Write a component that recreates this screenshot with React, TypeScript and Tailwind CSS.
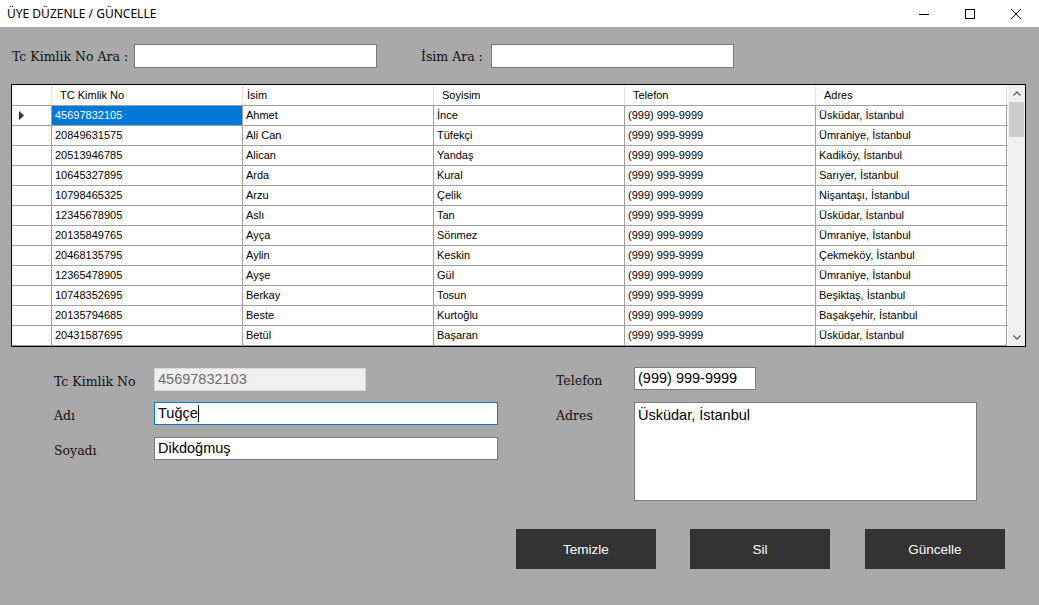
import React from "react";

type Member = {
  tc: string;
  ad: string;
  soyad: string;
  telefon: string;
  adres: string;
};

const MEMBERS: Member[] = [
  { tc: "45697832105", ad: "Ahmet", soyad: "İnce", telefon: "(999) 999-9999", adres: "Üsküdar, İstanbul" },
  { tc: "20849631575", ad: "Ali Can", soyad: "Tüfekçi", telefon: "(999) 999-9999", adres: "Ümraniye, İstanbul" },
  { tc: "20513946785", ad: "Alican", soyad: "Yandaş", telefon: "(999) 999-9999", adres: "Kadiköy, İstanbul" },
  { tc: "10645327895", ad: "Arda", soyad: "Kural", telefon: "(999) 999-9999", adres: "Sarıyer, İstanbul" },
  { tc: "10798465325", ad: "Arzu", soyad: "Çelik", telefon: "(999) 999-9999", adres: "Nişantaşı, İstanbul" },
  { tc: "12345678905", ad: "Aslı", soyad: "Tan", telefon: "(999) 999-9999", adres: "Üsküdar, İstanbul" },
  { tc: "20135849765", ad: "Ayça", soyad: "Sönmez", telefon: "(999) 999-9999", adres: "Ümraniye, İstanbul" },
  { tc: "20468135795", ad: "Aylin", soyad: "Keskin", telefon: "(999) 999-9999", adres: "Çekmeköy, İstanbul" },
  { tc: "12365478905", ad: "Ayşe", soyad: "Gül", telefon: "(999) 999-9999", adres: "Ümraniye, İstanbul" },
  { tc: "10748352695", ad: "Berkay", soyad: "Tosun", telefon: "(999) 999-9999", adres: "Beşiktaş, İstanbul" },
  { tc: "20135794685", ad: "Beste", soyad: "Kurtoğlu", telefon: "(999) 999-9999", adres: "Başakşehir, İstanbul" },
  { tc: "20431587695", ad: "Betül", soyad: "Başaran", telefon: "(999) 999-9999", adres: "Üsküdar, İstanbul" },
];

const label = "font-['DejaVu_Serif',serif] text-[12.5px] text-[#111]";
const formLabel = `${label} pt-[5px]`;
const field = "border font-['Liberation_Sans',Arial,sans-serif] text-[14.5px] px-[3px]";
const box = `${field} border-[#7a7a7a] bg-white text-black`;

function TitleBar() {
  return (
    <div className="h-[27px] bg-white flex items-center pl-[7px] shrink-0">
      <span className="font-['Noto_Sans',sans-serif] text-[12px] text-black flex-1">ÜYE DÜZENLE / GÜNCELLE</span>
      {/* window controls */}
      <div className="flex h-full">
        <div className="w-[47px] flex items-center justify-center">
          <svg width="10" height="10" viewBox="0 0 10 10">
            <path d="M0 5.5h10" stroke="#000" strokeWidth="1" />
          </svg>
        </div>
        <div className="w-[46px] flex items-center justify-center">
          <svg width="10" height="10" viewBox="0 0 10 10">
            <rect x="0.5" y="0.5" width="9" height="9" fill="none" stroke="#000" strokeWidth="1" />
          </svg>
        </div>
        <div className="w-[46px] flex items-center justify-center">
          <svg width="10" height="10" viewBox="0 0 10 10">
            <path d="M0 0L10 10M10 0L0 10" stroke="#000" strokeWidth="1" />
          </svg>
        </div>
      </div>
    </div>
  );
}

function SearchRow() {
  return (
    <div className="flex items-center mt-[17px] pl-[12px] h-[24px]">
      <span className={`${label} w-[122px] pt-[2px]`}>Tc Kimlik No Ara :</span>
      <div className={`${box} w-[243px] h-[24px]`} />
      <span className={`${label} w-[70px] ml-[44px] pt-[2px]`}>İsim Ara :</span>
      <div className={`${box} w-[243px] h-[24px]`} />
    </div>
  );
}

const columns = ["TC Kimlik No", "İsim", "Soyisim", "Telefon", "Adres"];

function Grid() {
  return (
    <div className="ml-[11px] mt-[16px] w-[1015px] h-[263px] border border-black bg-white flex font-['Liberation_Sans',Arial,sans-serif] text-[11px] text-black">
      <div className="flex flex-col w-[996px]">
        {/* header */}
        <div className="flex h-[20px]">
          <div className="w-[40px] border-r border-[#e3e3e3]" />
          {columns.map((c, i) => (
            <div
              key={c}
              className={`w-[191px] border-r border-[#e3e3e3] flex items-center ${i === 0 || i > 1 ? "pl-[8px]" : "pl-[4px]"}`}
            >
              {c}
            </div>
          ))}
        </div>
        {/* rows */}
        {MEMBERS.map((m, r) => (
          <div key={m.tc} className="flex h-[20px] border-t border-[#a0a0a0]">
            <div className="w-[40px] border-r border-[#a0a0a0] flex items-center pl-[7px]">
              {r === 0 && (
                <svg width="5" height="9" viewBox="0 0 5 9">
                  <path d="M0 0L5 4.5L0 9Z" fill="#333" />
                </svg>
              )}
            </div>
            {[m.tc, m.ad, m.soyad, m.telefon, m.adres].map((v, i) => (
              <div
                key={i}
                className={`w-[191px] border-r border-[#a0a0a0] flex items-center pl-[3px] whitespace-nowrap ${
                  r === 0 && i === 0 ? "bg-[#0078d7] text-white" : ""
                }`}
              >
                {v}
              </div>
            ))}
          </div>
        ))}
        <div className="border-t border-[#a0a0a0] w-[995px]" />
      </div>
      {/* scrollbar */}
      <div className="w-[17px] bg-[#f0f0f0] flex flex-col items-center ml-auto">
        <div className="h-[17px] flex items-center justify-center">
          <svg width="8" height="5" viewBox="0 0 8 5">
            <path d="M0.5 4.5L4 1L7.5 4.5" fill="none" stroke="#606060" strokeWidth="1.3" />
          </svg>
        </div>
        <div className="w-[15px] h-[35px] bg-[#cdcdcd]" />
        <div className="flex-1" />
        <div className="h-[17px] flex items-center justify-center">
          <svg width="8" height="5" viewBox="0 0 8 5">
            <path d="M0.5 0.5L4 4L7.5 0.5" fill="none" stroke="#606060" strokeWidth="1.3" />
          </svg>
        </div>
      </div>
    </div>
  );
}

function Form() {
  return (
    <div className="flex mt-[21px] pl-[54px]">
      <div className="flex flex-col w-[444px]">
        <div className="flex items-center h-[23px]">
          <span className={`${formLabel} w-[100px]`}>Tc Kimlik No</span>
          <div className={`${field} w-[212px] h-[23px] flex items-center bg-[#f0f0f0] border-[#d9d9d9] text-[#6d6d6d]`}>
            45697832103
          </div>
        </div>
        <div className="flex items-center h-[23px] mt-[11px]">
          <span className={`${formLabel} w-[100px]`}>Adı</span>
          <div className={`${field} w-[344px] h-[23px] flex items-center bg-white text-black border-[#0078d7]`}>
            Tuğçe<span className="w-px h-[17px] bg-black" />
          </div>
        </div>
        <div className="flex items-center h-[23px] mt-[12px]">
          <span className={`${formLabel} w-[100px]`}>Soyadı</span>
          <div className={`${box} w-[344px] h-[23px] flex items-center`}>Dikdoğmuş</div>
        </div>
      </div>
      <div className="flex flex-col ml-[58px]">
        <div className="flex items-center h-[23px] -mt-px">
          <span className={`${formLabel} w-[78px]`}>Telefon</span>
          <div className={`${box} w-[122px] h-[23px] flex items-center`}>(999) 999-9999</div>
        </div>
        <div className="flex mt-[12px]">
          <div className="w-[78px] h-[23px] flex items-center">
            <span className={formLabel}>Adres</span>
          </div>
          <div className={`${box} w-[343px] h-[99px] pt-[2px]`}>Üsküdar, İstanbul</div>
        </div>
      </div>
    </div>
  );
}

function Buttons() {
  const btn =
    "w-[140px] h-[40px] bg-[#333333] text-white font-['Liberation_Sans',Arial,sans-serif] text-[13.5px] flex items-center justify-center pt-[2px]";
  return (
    <div className="flex justify-end pr-[34px] mt-[28px] gap-[34px]">
      <button className={btn}>Temizle</button>
      <button className={btn}>Sil</button>
      <button className={`${btn} ml-px`}>Güncelle</button>
    </div>
  );
}

export default function App() {
  return (
    <div className="w-[1039px] h-[605px] flex flex-col overflow-hidden">
      <TitleBar />
      <div className="flex-1 bg-[#a9a9a9] flex flex-col">
        <SearchRow />
        <Grid />
        <Form />
        <Buttons />
      </div>
    </div>
  );
}
